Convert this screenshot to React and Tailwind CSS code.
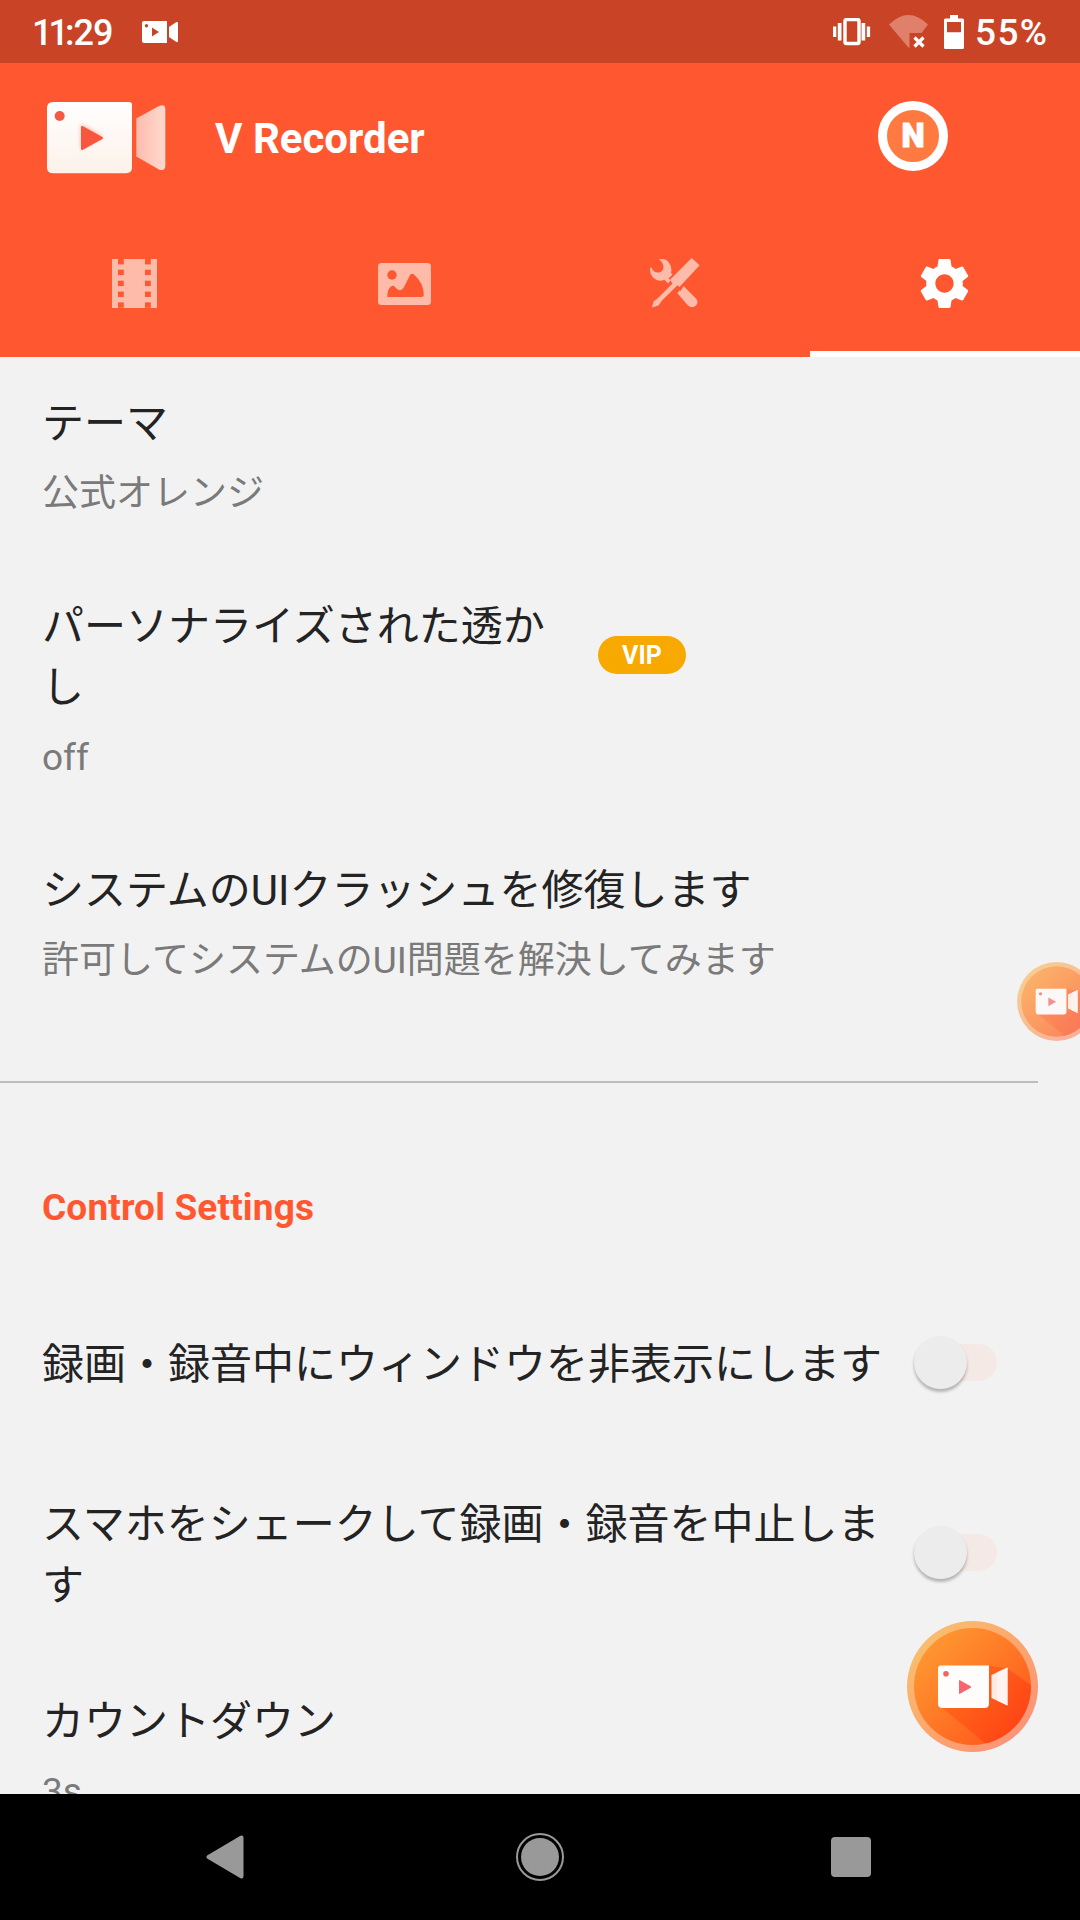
import { MdSettings } from 'react-icons/md';

const preferences = [
  { title: 'テーマ', value: '公式オレンジ', row: 'mt-[36px]', width: 'w-[860px]' },
  { title: 'パーソナライズされた透かし', value: 'off', row: 'mt-[76px]', width: 'w-[514px]', vip: true },
  {
    title: 'システムのUIクラッシュを修復します',
    value: '許可してシステムのUI問題を解決してみます',
    row: 'mt-[76px]',
    width: 'w-[860px]',
  },
];

const toggles = [
  { title: '録画・録音中にウィンドウを非表示にします', row: 'mt-[100px]' },
  { title: 'スマホをシェークして録画・録音を中止します', row: 'mt-[99px]' },
];

function StatusBar() {
  return (
    <div className="flex h-[63px] shrink-0 items-center bg-[#c94426] pl-[32px] pr-[31px] text-white">
      <div className="flex w-[82px] pt-[2px] text-[36px] font-medium leading-none">
        <span className="tracking-[-4px]">11</span>
        <span className="tracking-[-1px]">:29</span>
      </div>
      <svg className="ml-[28px]" width="36" height="22" viewBox="0 0 36 22" fill="#fff">
        <path
          fillRule="evenodd"
          d="M2 0h23v22H2a2 2 0 0 1-2-2V2a2 2 0 0 1 2-2zM4.500 3a1.700 1.700 0 1 0 0 3.400a1.700 1.700 0 0 0 0-3.400zM10 6.500v9l7-4.500z"
        />
        <path d="M27 6l7.500-5q1.500-.5 1.500 1v18q0 1.500-1.500 1L27 16z" />
      </svg>
      <svg className="ml-auto" width="38" height="28" viewBox="0 0 38 28" fill="#fff">
        <rect x="12" y="1.500" width="14" height="24" rx="1.500" fill="none" stroke="#fff" strokeWidth="3.400" />
        <rect x="0" y="8.500" width="3.300" height="10.500" />
        <rect x="4.800" y="5" width="3.700" height="17.500" />
        <rect x="28.500" y="5" width="3.700" height="17.500" />
        <rect x="33.800" y="8.500" width="3.300" height="10.500" />
      </svg>
      <svg className="ml-[18px]" width="40" height="34" viewBox="0 0 40 34">
        <path d="M0 9.500Q19.500-9.500 39 9.500L32.500 18H20.500v15L19 32z" fill="#e0806a" />
        <path d="M25.500 22.500l9 9M34.500 22.500l-9 9" stroke="#fff" strokeWidth="3.200" />
      </svg>
      <svg className="ml-[15px]" width="20" height="34" viewBox="0 0 20 34" fill="#fff">
        <path
          fillRule="evenodd"
          d="M6 0h8v3.500h4.500q1.500 0 1.500 1.500v27.500q0 1.500-1.500 1.500h-17Q0 34 0 32.500V5q0-1.500 1.500-1.500H6zM3 7v10.300h14V7z"
        />
      </svg>
      <span className="ml-[11px] w-[74px] whitespace-nowrap pt-[2px] text-[37px] font-medium leading-none tracking-[1.400px]">
        55%
      </span>
    </div>
  );
}

function Logo() {
  return (
    <svg width="119" height="72" viewBox="0 0 119 72">
      <defs>
        <linearGradient id="logo-body" x1="0" y1="0" x2="0" y2="1">
          <stop offset="0" stopColor="#fff" />
          <stop offset="1" stopColor="#fdf1ea" />
        </linearGradient>
        <linearGradient id="logo-lens" x1="0" y1="0" x2="1" y2="0">
          <stop offset="0" stopColor="#ffbcad" />
          <stop offset="1" stopColor="#ffd9cf" />
        </linearGradient>
        <filter id="play-glow" x="-50%" y="-50%" width="200%" height="200%">
          <feGaussianBlur stdDeviation="2" />
        </filter>
      </defs>
      <path d="M6 0h76q3 0 3 3v62.500q0 5.700-6 5.700H6q-6 0-6-6V6q0-6 6-6z" fill="url(#logo-body)" />
      <circle cx="12.700" cy="14" r="5" fill="#f55a45" />
      <path d="M34 22v25l22-12.500z" fill="#ffb9a6" filter="url(#play-glow)" />
      <path d="M35 25v22l20-11z" fill="#f8563f" stroke="#f8563f" strokeWidth="2" strokeLinejoin="round" />
      <path d="M89.300 16.500L112 4q6.300-2.500 6.300 3v57q0 5.500-6.300 3.500L89.300 54.500z" fill="url(#logo-lens)" />
    </svg>
  );
}

function FilmIcon() {
  const holes = [0, 10.7, 21.7, 32.6, 43.4];
  return (
    <svg width="45" height="49" viewBox="0 0 45 49">
      <rect width="45" height="49" fill="#ffbbaa" />
      {holes.map((y) => (
        <g key={y} fill="#ff5831">
          <rect x="6" y={y} width="5.800" height="5.400" />
          <rect x="33" y={y} width="5.800" height="5.400" />
        </g>
      ))}
    </svg>
  );
}

function GalleryIcon() {
  return (
    <svg width="53" height="42" viewBox="0 0 53 42">
      <rect width="53" height="42" rx="3.500" fill="#ffbbaa" />
      <g fill="#ff5831">
        <circle cx="14" cy="12" r="4.700" />
        <path d="M9.300 33.500Q9.500 25.500 13 23.500Q15 22 17 24C20 27.500 23 29 26 24L31.500 13Q33.500 9 36.500 12Q45.500 20 45.800 31.500Q46 34 43.500 34H10.500Q9.300 34 9.300 33.500z" />
      </g>
    </svg>
  );
}

function ToolsIcon() {
  return (
    <svg width="50" height="50" viewBox="0 0 50 50" fill="#ffbbaa">
      <path d="M8.600 1.500Q15-.5 18.500 4Q22.500 9 21 15L22.500 16.500L18.500 20.500L20.500 22.500L18 25.500L14.500 21.800Q8 24.500 3 19.500Q-1 15 .5 9Q2 9.500 3 12.500Q5.500 15.500 10.500 14Q13.500 12.500 13.500 8.500Q12.500 3 8.600 1.500z" />
      <path d="M41.700 0L49.600 7.300L29.500 29L27.500 27.300L25.500 29.300L11.500 43L8.500 47.500L2 49.500L3.500 43.500L8 40L22.500 25.500L20 21.700z" />
      <path d="M33.500 28L46 40.500Q49 44 46 47.500Q42 51 38 47.500L27.200 35L29.800 32.500L30.800 33z" />
    </svg>
  );
}

function Header() {
  return (
    <header className="flex h-[294px] shrink-0 flex-col bg-[#ff5831]">
      <div className="flex h-[149px] items-center pl-[47px] pr-[132px]">
        <Logo />
        <h1 className="ml-[49px] pt-[2px] text-[42px] font-bold leading-none text-white">V Recorder</h1>
        <div className="mb-[4px] ml-auto flex size-[70px] items-center justify-center rounded-full border-[9px] border-white bg-[#ff7a40]">
          <span className="text-[33px] font-black leading-none text-white [-webkit-text-stroke:1px_white]">N</span>
        </div>
      </div>
      <nav className="grid h-[145px] grid-cols-4">
        <div className="flex items-center justify-center pb-[3px] pr-[2px]">
          <FilmIcon />
        </div>
        <div className="flex items-center justify-center pb-[2px] pr-px">
          <GalleryIcon />
        </div>
        <div className="flex items-center justify-center pb-[3px] pr-[1px]">
          <ToolsIcon />
        </div>
        <div className="flex items-center justify-center border-b-[6px] border-white pr-[2px] pt-[3px]">
          <MdSettings className="size-[61px] text-white" />
        </div>
      </nav>
    </header>
  );
}

function Switch() {
  return (
    <div className="mb-[5px] flex h-[37px] w-[84px] shrink-0 items-center rounded-full bg-[#f5e9e6] pl-px">
      <div className="size-[53px] shrink-0 rounded-full bg-[#ececec] shadow-[0_3px_3px_rgba(0,0,0,0.26)]" />
    </div>
  );
}

// Round record button, shared by the screen-edge bubble and the floating action button
function RecordButton({ id, size }) {
  return (
    <svg width={size} height={size} viewBox="0 0 131 131">
      <defs>
        <linearGradient id={`${id}-ring`} x1="0.150" y1="0.150" x2="0.850" y2="0.850">
          <stop offset="0" stopColor="#f8bd70" />
          <stop offset="0.500" stopColor="#fda66c" />
          <stop offset="1" stopColor="#fb9478" />
        </linearGradient>
        <linearGradient id={`${id}-fill`} x1="0.150" y1="0.150" x2="0.850" y2="0.850">
          <stop offset="0" stopColor="#ff9530" />
          <stop offset="1" stopColor="#ff5a1c" />
        </linearGradient>
        <linearGradient id={`${id}-shade`} x1="0.100" y1="0.200" x2="0.800" y2="0.700">
          <stop offset="0" stopColor="#ff6a1c" />
          <stop offset="1" stopColor="#ff4315" />
        </linearGradient>
        <clipPath id={`${id}-clip`}>
          <circle cx="65.500" cy="65.500" r="58.500" />
        </clipPath>
      </defs>
      <circle cx="65.500" cy="65.500" r="65.500" fill={`url(#${id}-ring)`} />
      <circle cx="65.500" cy="65.500" r="58.500" fill={`url(#${id}-fill)`} />
      <g clipPath={`url(#${id}-clip)`}>
        <path d="M33 85L78 122L100 135L135 100V72L101 48L82 44.500z" fill={`url(#${id}-shade)`} />
      </g>
      <path d="M34 44.500h48v38q0 4.500-4.500 4.500H35.500q-4.500 0-4.500-4.500V47.500q0-3 3-3z" fill="#fffdfb" />
      <circle cx="39" cy="52.800" r="2.800" fill="#f2655c" />
      <path d="M52.500 59.500v13l11.500-6.500z" fill="#f8656c" stroke="#f8656c" strokeLinejoin="round" />
      <path d="M84.500 54L100.500 46.500V84.500L84.500 77z" fill="#ffe9e3" />
      <path d="M90 51.300L100.500 46.500V84.500L90 79.500z" fill="#fff4f0" />
    </svg>
  );
}

function NavigationBar() {
  return (
    <div className="flex h-[126px] shrink-0 items-center bg-black pl-[206px] pr-[209px]">
      <svg width="38" height="44" viewBox="0 0 38 44">
        <path d="M35.500 2.500v39L2.500 22z" fill="#999" stroke="#999" strokeWidth="4" strokeLinejoin="round" />
      </svg>
      <div className="ml-[272px] flex size-[48px] items-center justify-center rounded-full border-[2.500px] border-[#999]">
        <div className="size-[38px] rounded-full bg-[#999]" />
      </div>
      <div className="ml-auto size-[40px] rounded-[4px] bg-[#999]" />
    </div>
  );
}

export default function App() {
  return (
    <div className="relative flex h-[1920px] w-[1080px] flex-col overflow-hidden bg-[#f2f2f2] font-['Roboto','Noto_Sans_CJK_JP',sans-serif] text-[#232323]">
      <StatusBar />
      <Header />

      <main className="flex h-[1437px] flex-col overflow-hidden">
        {preferences.map((item) => (
          <section key={item.title} className={`shrink-0 pl-[42px] ${item.row}`}>
            <div className="flex items-center">
              <h2 className={`text-[42px] leading-[61px] ${item.width}`}>{item.title}</h2>
              {item.vip && (
                <span className="mb-[4px] ml-[42px] flex h-[38px] w-[88px] items-center justify-center rounded-full bg-[#f7a900] pt-px text-[25px] font-bold text-white">
                  VIP
                </span>
              )}
            </div>
            <p className="mt-[13px] text-[37px] leading-[53px] text-[#7a7a7a]">{item.value}</p>
          </section>
        ))}

        <hr className="mt-[94px] w-[1038px] shrink-0 border-t-2 border-[#bdbdbd]" />

        <h3 className="mt-[98px] shrink-0 pl-[42px] text-[37px] font-bold leading-[53px] tracking-[0.150px] text-[#ff5831]">
          Control Settings
        </h3>

        {toggles.map((item) => (
          <section key={item.title} className={`flex shrink-0 items-center pl-[42px] pr-[83px] ${item.row}`}>
            <h2 className="mr-auto w-[850px] text-[42px] leading-[61px]">{item.title}</h2>
            <Switch />
          </section>
        ))}

        <section className="mt-[75px] shrink-0 pl-[42px]">
          <h2 className="text-[42px] leading-[61px]">カウントダウン</h2>
          <p className="mt-[13px] text-[37px] leading-[53px] text-[#7a7a7a]">3s</p>
        </section>
      </main>

      <NavigationBar />

      <div className="absolute left-[1017px] top-[962px] opacity-70">
        <RecordButton id="bubble" size={79} />
      </div>
      <div className="absolute left-[907px] top-[1621px]">
        <RecordButton id="fab" size={131} />
      </div>
    </div>
  );
}
